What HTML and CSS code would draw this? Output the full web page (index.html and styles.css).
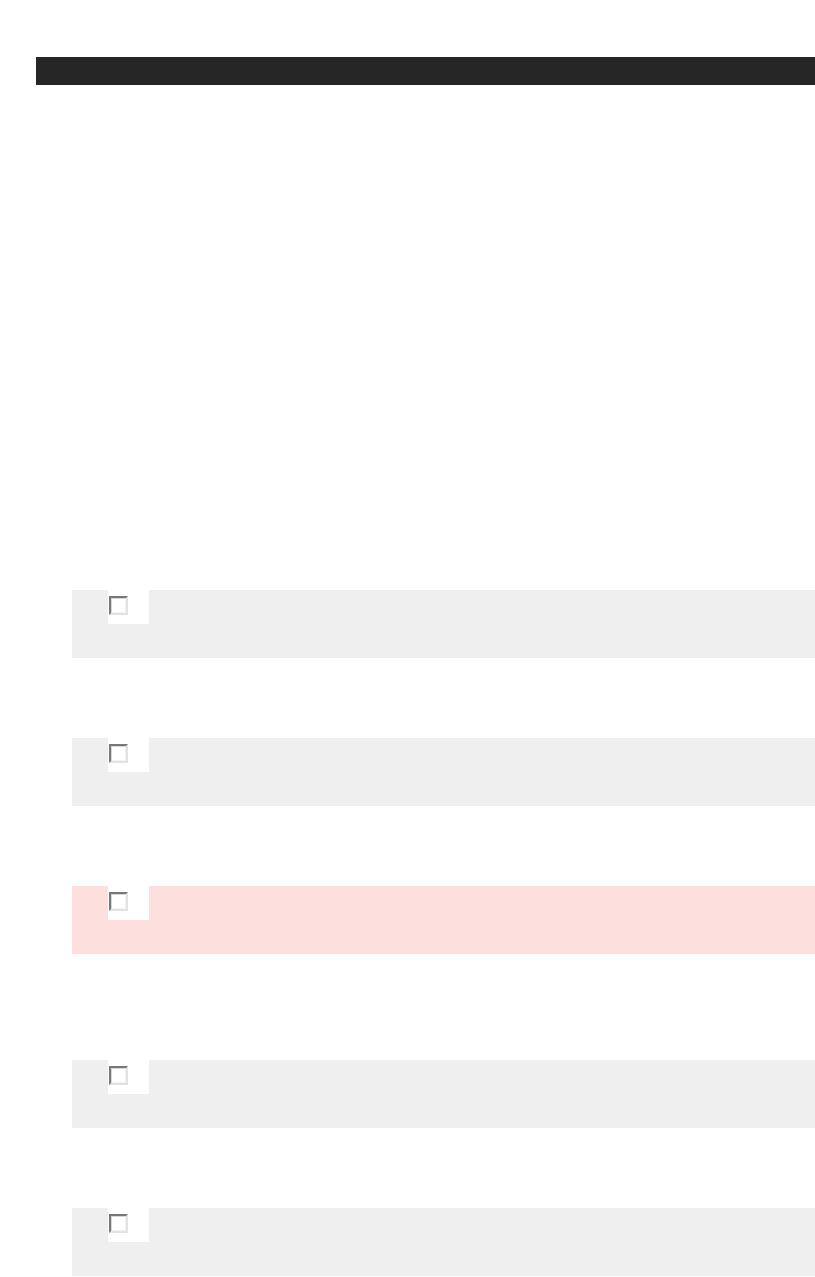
FILE: index.html
```html
<!DOCTYPE html>
<html>
<head>
<meta charset="utf-8">
<link rel="stylesheet" href="styles.css">
</head>
<body>
<div class="page">
  <div class="topbar"></div>
  <div class="list">
    <div class="card"><div class="cbwrap"><span class="cb"></span></div></div>
    <div class="card"><div class="cbwrap"><span class="cb"></span></div></div>
    <div class="card card-alert"><div class="cbwrap"><span class="cb"></span></div></div>
    <div class="card"><div class="cbwrap"><span class="cb"></span></div></div>
    <div class="card"><div class="cbwrap"><span class="cb"></span></div></div>
  </div>
</div>
</body>
</html>
```
FILE: styles.css
```css
html, body {
  margin: 0;
  padding: 0;
  background: #ffffff;
  font-family: "Liberation Sans", Arial, sans-serif;
}
.page {
  padding-left: 36px;
  padding-top: 57px;
}
.topbar {
  height: 28px;
  background: #262626;
}
.list {
  padding-left: 36px;
  padding-top: 505px;
  display: flex;
  flex-direction: column;
}
.card {
  height: 68px;
  background: #efefef;
  padding-left: 36px;
  margin-bottom: 80px;
  display: flex;
  align-items: flex-start;
}
.card:last-child {
  margin-bottom: 0;
}
.card-alert {
  background: #fde0de;
  margin-bottom: 106px;
}
.cbwrap {
  width: 41px;
  height: 34px;
  background: #ffffff;
  box-sizing: border-box;
  padding: 6px 0 0 1px;
}
.cb {
  display: block;
  width: 19px;
  height: 19px;
  box-sizing: border-box;
  border: 2px solid;
  border-color: #787878 #e2e2e2 #e2e2e2 #787878;
  box-shadow: inset 1px 1px 0 #d8d8d8, inset -1px -1px 0 #f2f2f2;
  background: #ffffff;
}
```
